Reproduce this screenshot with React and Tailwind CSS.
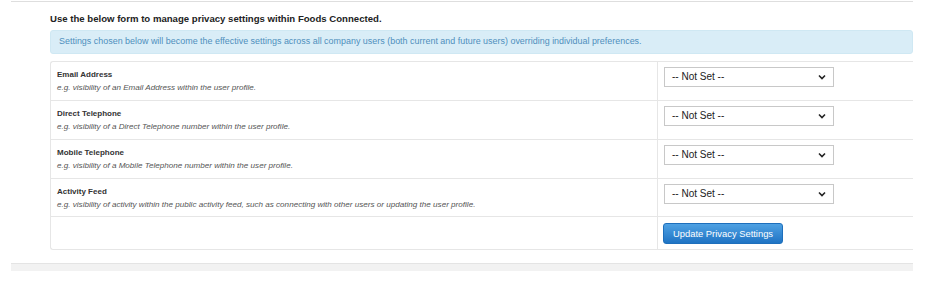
import React from "react";

const rows = [
  { label: "Email Address", desc: "e.g. visibility of an Email Address within the user profile.", h: "h-[38px]" },
  { label: "Direct Telephone", desc: "e.g. visibility of a Direct Telephone number within the user profile.", h: "h-[39px]" },
  { label: "Mobile Telephone", desc: "e.g. visibility of a Mobile Telephone number within the user profile.", h: "h-[39px]" },
  { label: "Activity Feed", desc: "e.g. visibility of activity within the public activity feed, such as connecting with other users or updating the user profile.", h: "h-[38px]" },
];

function Select() {
  return (
    <div className="w-[170px] h-[20px] border border-[#c8c8c8] bg-white flex items-center justify-between pl-[7px] pr-[7px]">
      <span className="text-[10px] text-[#222] leading-none">-- Not Set --</span>
      <svg width="8" height="6" viewBox="0 0 8 6">
        <path d="M1 1.5 L4 4.5 L7 1.5" fill="none" stroke="#222" strokeWidth="1.6" />
      </svg>
    </div>
  );
}

export default function App() {
  return (
    <div className="w-[927px] h-[291px] bg-white overflow-hidden" style={{ fontFamily: '"Liberation Sans", Arial, sans-serif' }}>
      <div className="ml-[11px] w-[902px]">
        <div className="h-[1px] mt-[1px] bg-[#dedede]" />
        <div className="pl-[39px]">
          <div className="pt-[10px] h-[28px] text-[9.6px] font-bold text-[#222] leading-[14px]">
            Use the below form to manage privacy settings within Foods Connected.
          </div>
          <div className="h-[24px] bg-[#d9edf7] border border-[#cfe8f3] rounded-[3px] flex items-center pl-[8px] text-[8.95px] text-[#4f8fbd]">
            Settings chosen below will become the effective settings across all company users (both current and future users) overriding individual preferences.
          </div>
          <div className="mt-[7px] border-l border-t border-b border-[#e6e6e6] rounded-l-[3px]">
            {rows.map((r, i) => (
              <div key={i} className={`flex ${r.h} ${i > 0 ? "border-t border-[#e6e6e6]" : ""}`}>
                <div className="w-[607px] border-r border-[#e6e6e6] pl-[6px] pt-[7px]">
                  <div className="text-[8px] font-bold text-[#333] leading-[11px]">{r.label}</div>
                  <div className="text-[8.1px] italic text-[#555] leading-[11px] mt-[2px]">{r.desc}</div>
                </div>
                <div className="pl-[6px] pt-[5px]">
                  <Select />
                </div>
              </div>
            ))}
            <div className="flex h-[33px] border-t border-[#e6e6e6]">
              <div className="w-[607px] border-r border-[#e6e6e6]" />
              <div className="pl-[5px] pt-[6px] flex items-start">
                <button className="h-[21px] px-[9px] rounded-[3px] border border-[#1e6fbc] bg-gradient-to-b from-[#4ea1e3] to-[#1f74c4] text-white text-[9.4px] leading-none">
                  Update Privacy Settings
                </button>
              </div>
            </div>
          </div>
        </div>
        <div className="mt-[13px] h-[8px] bg-[#f2f2f2] border-t border-[#e4e4e4]" />
      </div>
    </div>
  );
}
